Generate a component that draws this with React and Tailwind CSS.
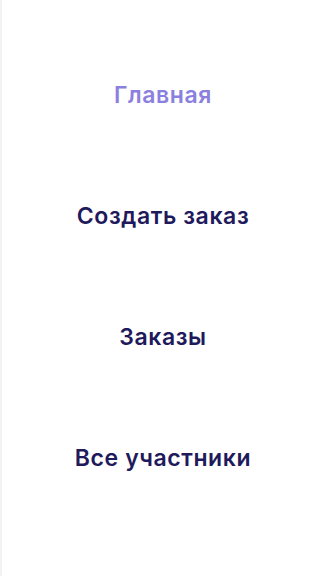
export default function App() {
  const items = ["Главная", "Создать заказ", "Заказы", "Все участники"];
  return (
    <div className="h-[576px] w-[324px] bg-white border-l-2 border-[#f2f2f4] overflow-hidden" style={{ fontFamily: "Inter, 'Noto Sans', sans-serif" }}>
      <nav className="flex flex-col items-center pt-[81px] gap-[93px]">
        {items.map((t, i) => (
          <a
            key={t}
            className={
              "block text-[23px] leading-[28px] font-semibold tracking-[0.6px] " +
              (i === 0 ? "text-[#8a80e0]" : "text-[#1f1a5c]")
            }
          >
            {t}
          </a>
        ))}
      </nav>
    </div>
  );
}
